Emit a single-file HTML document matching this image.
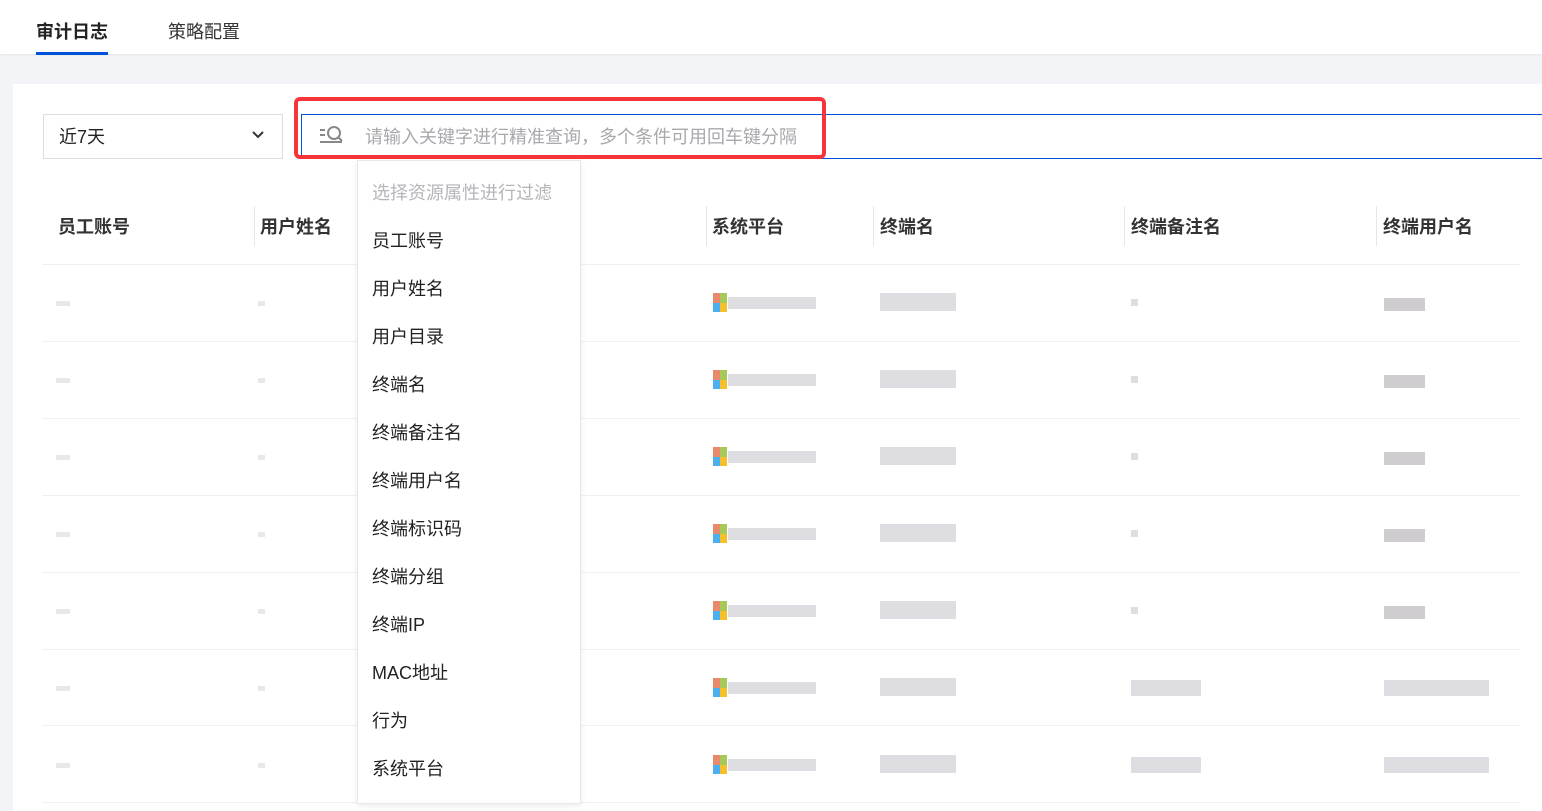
<!DOCTYPE html>
<html><head><meta charset="utf-8"><style>
*{margin:0;padding:0;box-sizing:border-box}
body{width:1542px;height:811px;overflow:hidden;background:#f3f4f7;font-family:"Liberation Sans","Noto Sans CJK SC",sans-serif;position:relative;color:#222}
.abs{position:absolute}
.top{left:0;top:0;width:1542px;height:54px;background:#fff;box-shadow:0 1px 3px rgba(0,0,0,.06)}
.card{left:13px;top:84px;width:1529px;height:727px;background:#fff}
.th{font-size:18px;font-weight:bold;color:#333;top:213px}
.sep{width:1px;height:40px;background:#e6e6e6;top:206px}
.line{left:42px;width:1478px;height:1px;background:#eef0f3}
.g{background:#dedee2}
.menu{left:357px;top:160px;width:224px;height:644px;background:#fff;border:1px solid #e8e8ea;box-shadow:0 2px 6px rgba(0,0,0,.08)}
.mi{position:absolute;left:14px;font-size:18px;color:#222}
</style></head><body>
<div class="abs top"></div>
<div class="abs" style="left:36px;top:18px;font-size:18px;font-weight:bold;color:#222">审计日志</div>
<div class="abs" style="left:36px;top:52px;width:72px;height:3px;background:#0052d9"></div>
<div class="abs" style="left:168px;top:18px;font-size:18px;color:#333">策略配置</div>
<div class="abs card"></div>
<div class="abs" style="left:43px;top:114px;width:240px;height:45px;border:1px solid #dcdde3;background:#fff"></div>
<div class="abs" style="left:59px;top:123px;font-size:18px;color:#222">近7天</div>
<svg class="abs" style="left:251px;top:129px" width="14" height="12"><path d="M2 3l5 5 5-5" stroke="#333" stroke-width="2" fill="none"/></svg>
<div class="abs" style="left:301px;top:114px;width:1241px;height:45px;border:1px solid #0052d9;border-right:none;background:#fff"></div>
<div class="abs" style="left:294px;top:97px;width:532px;height:62px;border:4px solid #f5353a;border-radius:6px"></div>
<svg class="abs" style="left:318px;top:124px" width="26" height="22"><path d="M2 6h5M2 11h5M2 18h22" stroke="#888" stroke-width="2"/><circle cx="16" cy="9" r="6" stroke="#888" stroke-width="2" fill="none"/><path d="M20 13l4 4" stroke="#888" stroke-width="2"/></svg>
<div class="abs" style="left:365px;top:123px;font-size:18px;color:#a8a8ad">请输入关键字进行精准查询，多个条件可用回车键分隔</div>
<div class="abs th" style="left:58px">员工账号</div>
<div class="abs sep" style="left:254px"></div>
<div class="abs th" style="left:260px">用户姓名</div>
<div class="abs sep" style="left:706px"></div>
<div class="abs th" style="left:712px">系统平台</div>
<div class="abs sep" style="left:873px"></div>
<div class="abs th" style="left:880px">终端名</div>
<div class="abs sep" style="left:1124px"></div>
<div class="abs th" style="left:1131px">终端备注名</div>
<div class="abs sep" style="left:1376px"></div>
<div class="abs th" style="left:1383px">终端用户名</div>
<div class="abs line" style="top:264px"></div>
<div class="abs line" style="top:341px"></div>
<div class="abs line" style="top:418px"></div>
<div class="abs line" style="top:495px"></div>
<div class="abs line" style="top:572px"></div>
<div class="abs line" style="top:649px"></div>
<div class="abs line" style="top:725px"></div>
<div class="abs line" style="top:802px"></div>
<div id="rows"></div>
<script>
var ys=[303,380,457,534,611,688,765],h='';
ys.forEach(function(y,i){
h+='<div class="abs g" style="left:56px;top:'+(y-2)+'px;width:14px;height:5px;background:#e8e8ea"></div>';
h+='<div class="abs g" style="left:258px;top:'+(y-2)+'px;width:7px;height:5px;background:#e8e8ea"></div>';
h+='<div class="abs" style="left:713px;top:'+(y-10)+'px;width:7px;height:10px;background:#e98a6c"></div><div class="abs" style="left:720px;top:'+(y-10)+'px;width:7px;height:10px;background:#a6c95a"></div><div class="abs" style="left:713px;top:'+y+'px;width:7px;height:9px;background:#4ab0f0"></div><div class="abs" style="left:720px;top:'+y+'px;width:7px;height:9px;background:#f5c02c"></div>';
h+='<div class="abs g" style="left:728px;top:'+(y-6)+'px;width:88px;height:12px"></div>';
h+='<div class="abs g" style="left:880px;top:'+(y-10)+'px;width:76px;height:18px"></div>';
if(i<5){h+='<div class="abs g" style="left:1131px;top:'+(y-4)+'px;width:7px;height:7px"></div><div class="abs g" style="left:1384px;top:'+(y-5)+'px;width:41px;height:13px;background:#cfcdcf"></div>';}
else{h+='<div class="abs g" style="left:1131px;top:'+(y-8)+'px;width:70px;height:16px"></div><div class="abs g" style="left:1384px;top:'+(y-8)+'px;width:105px;height:16px"></div>';}
});
document.getElementById('rows').innerHTML=h;
</script>
<div class="abs menu">
<div class="mi" style="top:18px;color:#b5b5ba">选择资源属性进行过滤</div>
<div class="mi" style="top:66px">员工账号</div>
<div class="mi" style="top:114px">用户姓名</div>
<div class="mi" style="top:162px">用户目录</div>
<div class="mi" style="top:210px">终端名</div>
<div class="mi" style="top:258px">终端备注名</div>
<div class="mi" style="top:306px">终端用户名</div>
<div class="mi" style="top:354px">终端标识码</div>
<div class="mi" style="top:402px">终端分组</div>
<div class="mi" style="top:450px">终端IP</div>
<div class="mi" style="top:498px">MAC地址</div>
<div class="mi" style="top:546px">行为</div>
<div class="mi" style="top:594px">系统平台</div>
</div>
</body></html>
